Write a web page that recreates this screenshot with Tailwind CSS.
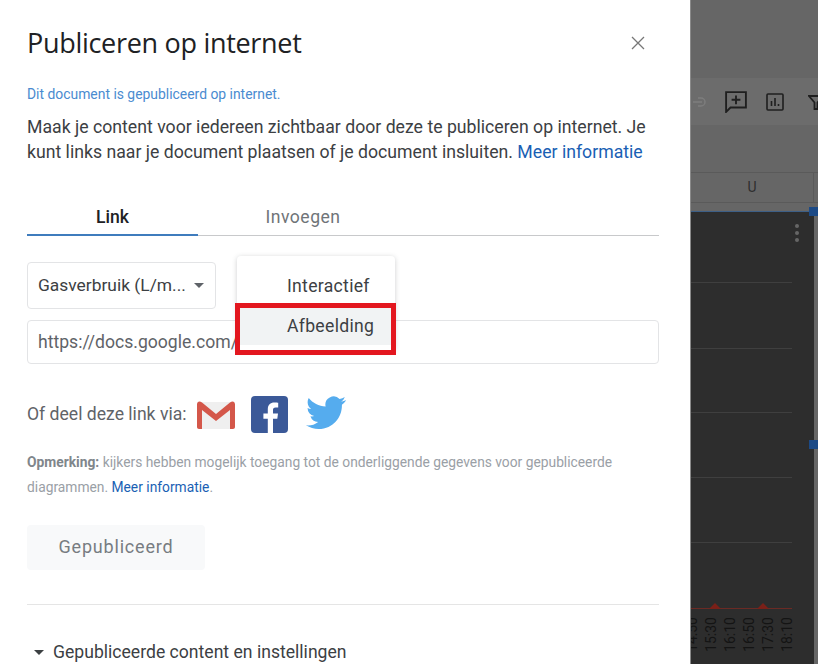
<!DOCTYPE html>
<html lang="en">
<head>
    <meta charset="UTF-8">
    <title>Publiceren op internet</title>
    <script src="https://cdn.jsdelivr.net/npm/@tailwindcss/browser@4"></script>
</head>
<body class="bg-white">
    <div class="flex w-[818px] h-[664px] overflow-hidden font-['Roboto',sans-serif]">
        <!-- dialog -->
        <div class="relative w-[690px] h-[664px] shrink-0 bg-white pl-[27px] pr-[31px] pt-[25px]">
            <div class="flex items-center justify-between h-[36px]">
                <h1 class="text-[27px] leading-[36px] text-[#202124] font-['Open_Sans',sans-serif] tracking-[-0.3px]">Publiceren op internet</h1>
                <svg class="w-[14px] h-[14px] mr-[14px]" viewBox="0 0 14 14" fill="none" stroke="#777" stroke-width="1.3"><path d="M1 1l12 12M13 1L1 13"/></svg>
            </div>
            <p class="mt-[24px] text-[13.900px] leading-[18px] text-[#4a8bd0]">Dit document is gepubliceerd op internet.</p>
            <p class="mt-[12px] text-[17.680px] leading-[25px] text-[#3c4043]">Maak je content voor iedereen zichtbaar door deze te publiceren op internet. Je kunt links naar je document plaatsen of je document insluiten. <span class="text-[#1a5fb4]">Meer informatie</span></p>

            <div class="flex mt-[39px] h-[32px] border-b border-[#c8c9cb]">
                <div class="w-[171px] h-[32px] border-b-2 border-[#3f7cbd] text-center text-[17.600px] leading-[26px] font-medium text-[#202124]">Link</div>
                <div class="w-[210px] text-center text-[17.600px] tracking-[0.5px] leading-[26px] text-[#6f7478]">Invoegen</div>
            </div>

            <div class="flex items-center justify-between w-[189px] h-[47px] mt-[26px] pl-[10px] pr-[11px] border border-[#e3e4e6] rounded-[4px]">
                <span class="text-[17.400px] text-[#3c4043] whitespace-nowrap">Gasverbruik (L/m...</span>
                <span class="w-0 h-0 border-x-[5px] border-x-transparent border-t-[5px] border-t-[#5f6368]"></span>
            </div>
            <div class="w-[632px] h-[44px] mt-[11px] pl-[10px] border border-[#e3e4e6] rounded-[4px] text-[17.600px] leading-[42px] text-[#5f6368]">https://docs.google.com/</div>

            <div class="flex items-center h-[40px] mt-[30px] text-[17.600px] text-[#5f6368]">
                <span>Of deel deze link via:</span>
                <svg class="ml-[10px] w-[38px] h-[28px] mt-[2px]" viewBox="0 0 38 28">
                    <path d="M3 1h32v27H3z" fill="#efefef"/>
                    <path d="M3 1L19 15 35 1v4L19 19 3 5z" fill="#dcdcdc"/>
                    <path d="M0 3.5C0 .5 2.5-.5 5 1.5L19 13 33 1.5c2.500-2 5-1 5 2V26c0 1.200-.8 2-2 2h-3V9L19 20 5 9v19H2c-1.200 0-2-.8-2-2z" fill="#d4574a"/>
                </svg>
                <svg class="ml-[16px] w-[37px] h-[37px]" viewBox="0 0 37 37">
                    <rect width="37" height="37" rx="4" fill="#3b5998"/>
                    <path d="M25.500 37V22.700h4.300l.7-5.300h-5v-3.300c0-1.600.5-2.600 2.700-2.600h2.500V6.700c-.5-.1-2.100-.2-3.900-.2-3.900 0-6.500 2.300-6.500 6.700v4.200h-4.400v5.300h4.400V37z" fill="#fff" transform="translate(-3.500 0)"/>
                </svg>
                <svg class="ml-[18px] w-[40px] h-[36px]" viewBox="0 0 24 21.500">
                    <path d="M23.953 2.570a10 10 0 01-2.825.775 4.958 4.958 0 002.163-2.723c-.951.555-2.005.959-3.127 1.184a4.920 4.920 0 00-8.384 4.482C7.690 6.095 4.067 4.130 1.640 1.162a4.822 4.822 0 00-.666 2.475c0 1.710.870 3.213 2.188 4.096a4.904 4.904 0 01-2.228-.616v.060a4.923 4.923 0 003.946 4.827 4.996 4.996 0 01-2.212.085 4.936 4.936 0 004.604 3.417 9.867 9.867 0 01-6.102 2.105c-.390 0-.779-.023-1.170-.067a13.995 13.995 0 007.557 2.209c9.053 0 13.998-7.496 13.998-13.985 0-.210 0-.420-.015-.630A9.935 9.935 0 0024 2.590z" fill="#55acee"/>
                </svg>
            </div>

            <p class="mt-[16px] w-[632px] text-[13.800px] leading-[25px] text-[#9aa0a6]"><b class="font-bold text-[#80868b]">Opmerking:</b> kijkers hebben mogelijk toegang tot de onderliggende gegevens voor gepubliceerde diagrammen. <span class="text-[#1a5fb4]">Meer informatie</span>.</p>

            <div class="flex items-center justify-center w-[178px] h-[45px] mt-[25px] pb-[2px] rounded-[4px] bg-[#f8f9fa] text-[18px] tracking-[0.8px] text-[#777c81]">Gepubliceerd</div>

            <div class="w-[632px] mt-[34px] border-t border-[#e5e5e5]"></div>

            <div class="flex items-center h-[24px] mt-[35px] pl-[7px] text-[17.600px] text-[#3c4043]">
                <span class="w-0 h-0 mr-[9px] border-x-[5px] border-x-transparent border-t-[5px] border-t-[#3c4043]"></span>
                <span>Gepubliceerde content en instellingen</span>
            </div>

            <!-- open menu -->
            <div class="absolute left-[237px] top-[256px] w-[158px] h-[94px] pt-[11px] bg-white rounded-[4px] shadow-[0_1px_5px_rgba(60,64,67,0.25)]">
                <div class="h-[38px] pl-[50px] text-[17.600px] tracking-[0.3px] leading-[38px] text-[#3c4043]">Interactief</div>
                <div class="h-[38px] pl-[50px] mt-[2px] bg-[#f1f3f4] text-[17.600px] tracking-[0.3px] leading-[38px] text-[#3c4043]">Afbeelding</div>
            </div>
            <!-- red annotation -->
            <div class="absolute left-[235px] top-[303px] w-[161px] h-[52px] border-[5px] border-[#e3171f]"></div>
        </div>

        <!-- sheet behind the dimmed backdrop -->
        <div class="flex flex-col w-[128px] h-[664px] shrink-0 bg-[#666666] border-l border-[#8a8a8a] overflow-hidden">
            <div class="h-[78px]"></div>
            <div class="flex items-center h-[47px] bg-[#6c6c6c]">
                <svg class="ml-[-3px] w-[18px] h-[10px] shrink-0" viewBox="0 0 18 10" fill="none" stroke="#7d7d7d" stroke-width="1.500"><path d="M3 1h-1M10 1h3a4 4 0 010 8h-3M5 5h9M3 9h-1"/></svg>
                <svg class="ml-[19px] w-[22px] h-[22px] shrink-0" viewBox="1 1 20 20" fill="none" stroke="#1f1f1f" stroke-width="1.700"><path d="M2 2h18v14H6l-4 4z"/><path d="M11 5v8M7 9h8"/></svg>
                <svg class="ml-[19px] w-[18px] h-[18px] shrink-0" viewBox="0 0 18 18" fill="none" stroke="#1f1f1f" stroke-width="1.600"><rect x="1" y="1" width="16" height="16" rx="1"/><path d="M5.500 8v5M9 5v8M12.500 11v2"/></svg>
                <svg class="ml-[24px] w-[16px] h-[16px] shrink-0" viewBox="0 0 16 16" fill="none" stroke="#1f1f1f" stroke-width="1.800"><path d="M1 2h14l-5.500 6.500V15h-3V8.500z"/></svg>
            </div>
            <div class="h-[47px]"></div>
            <div class="flex h-[31px] border-y border-[#5a5a5a]">
                <div class="w-[123px] border-r border-[#5a5a5a] text-center text-[14px] leading-[29px] text-[#2e2e2e]">U</div>
            </div>
            <div class="h-[8px]"></div>
            <!-- chart -->
            <div class="relative w-[123px] h-[453px] bg-[#2d2d2d] border-t border-[#3d5f86] pr-[22px]">
                <div class="h-[71px] border-b border-[#3f3f3f]"></div>
                <div class="h-[66px] border-b border-[#3f3f3f]"></div>
                <div class="h-[64px] border-b border-[#3f3f3f]"></div>
                <div class="h-[65px] border-b border-[#3f3f3f]"></div>
                <div class="h-[65px] border-b border-[#3f3f3f]"></div>
                <div class="h-[66px] border-b border-[#6b2a24]"></div>
                <div class="flex gap-[6px] mt-[8px] text-[14px] leading-[13px] text-[#141414]">
                    <span class="[writing-mode:vertical-rl] rotate-180 w-[13px] ml-[-5px]">14:50</span>
                    <span class="[writing-mode:vertical-rl] rotate-180 w-[13px]">15:30</span>
                    <span class="[writing-mode:vertical-rl] rotate-180 w-[13px]">16:10</span>
                    <span class="[writing-mode:vertical-rl] rotate-180 w-[13px]">16:50</span>
                    <span class="[writing-mode:vertical-rl] rotate-180 w-[13px]">17:30</span>
                    <span class="[writing-mode:vertical-rl] rotate-180 w-[13px]">18:10</span>
                </div>
                <!-- spikes and menu dots lie over the chart -->
                <span class="absolute left-[18px] top-[391px] w-0 h-0 border-x-[6px] border-x-transparent border-b-[6px] border-b-[#7a2018]"></span>
                <span class="absolute left-[66px] top-[391px] w-0 h-0 border-x-[6px] border-x-transparent border-b-[6px] border-b-[#7a2018]"></span>
                <div class="absolute left-[104px] top-[12px] flex flex-col gap-[3px]">
                    <span class="w-[4px] h-[4px] rounded-full bg-[#666666]"></span>
                    <span class="w-[4px] h-[4px] rounded-full bg-[#666666]"></span>
                    <span class="w-[4px] h-[4px] rounded-full bg-[#666666]"></span>
                </div>
                <span class="absolute left-[118px] top-[-5px] w-[9px] h-[9px] bg-[#1c4a86]"></span>
                <span class="absolute left-[118px] top-[228px] w-[9px] h-[9px] bg-[#1c4a86]"></span>
            </div>
        </div>
    </div>
</body>
</html>
